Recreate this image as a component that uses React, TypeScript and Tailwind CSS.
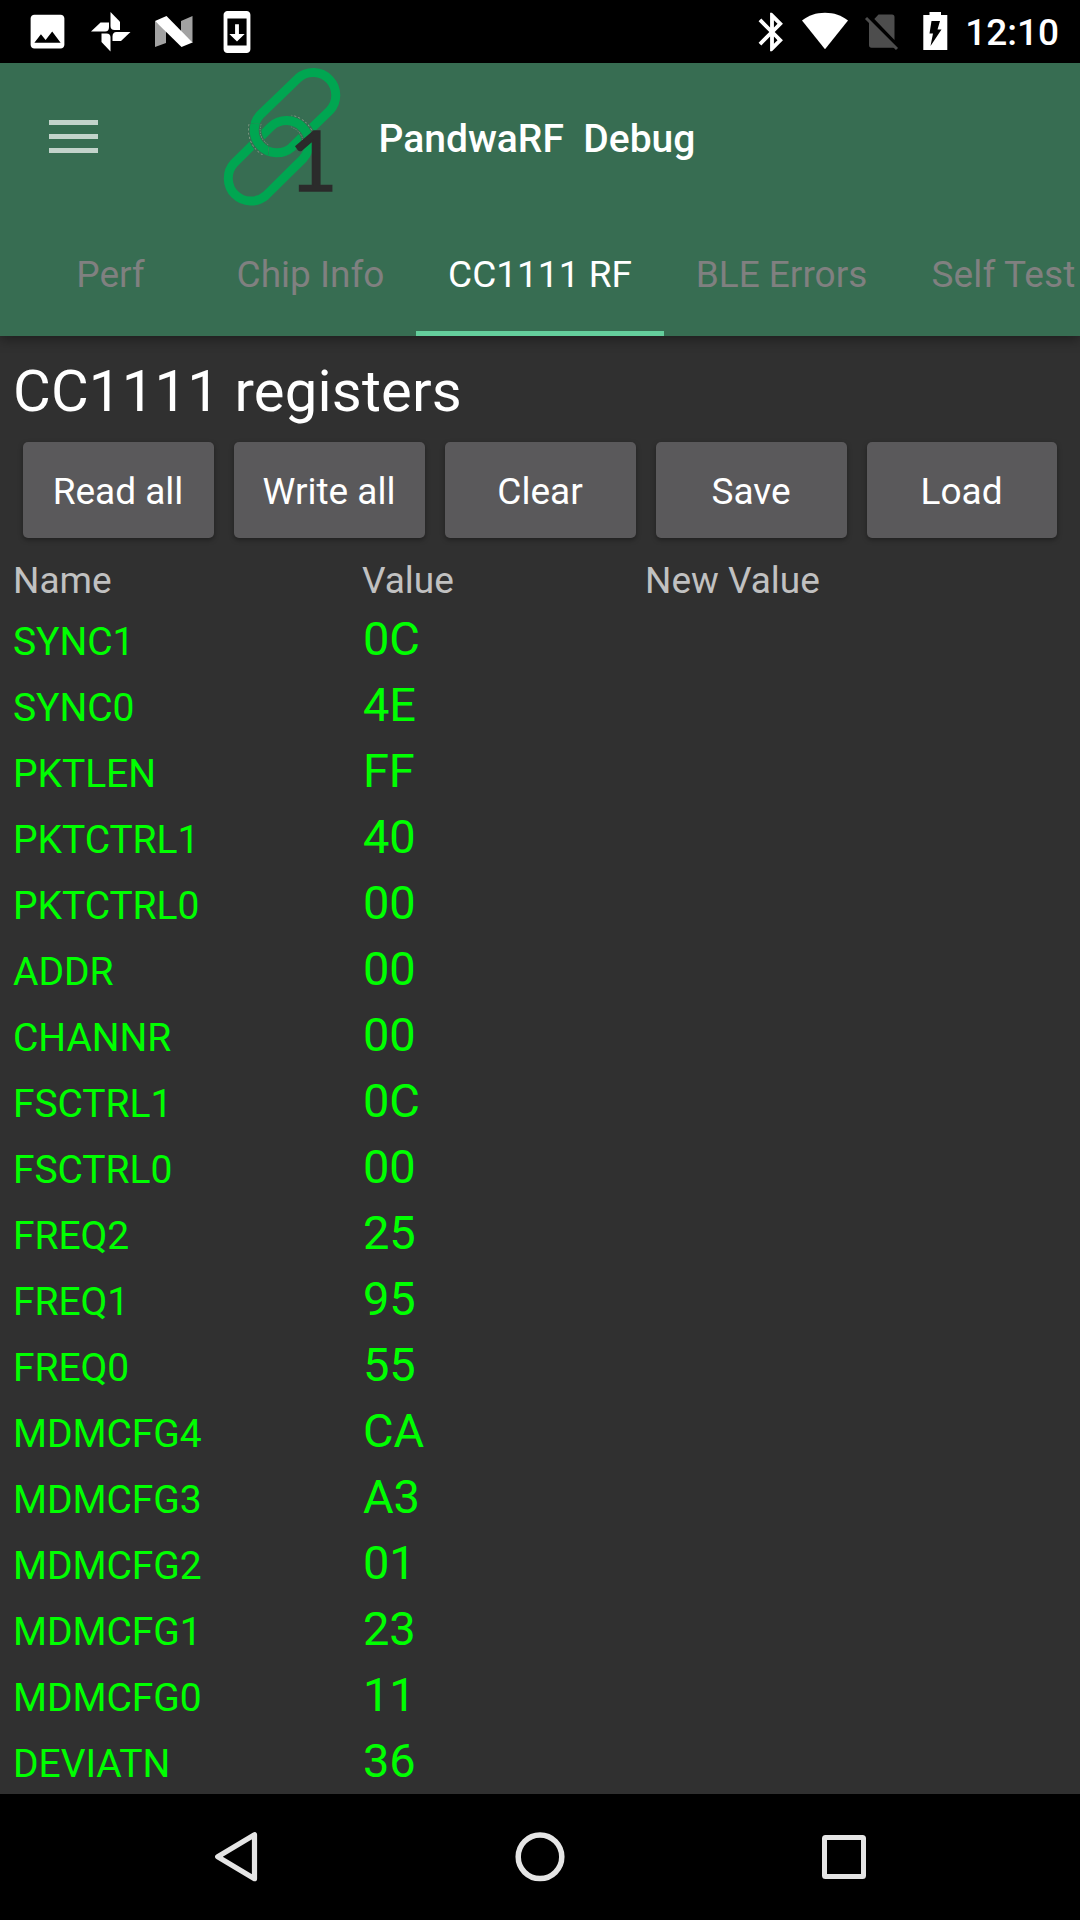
import React from "react";

const registers: [string, string][] = [
  ["SYNC1", "0C"],
  ["SYNC0", "4E"],
  ["PKTLEN", "FF"],
  ["PKTCTRL1", "40"],
  ["PKTCTRL0", "00"],
  ["ADDR", "00"],
  ["CHANNR", "00"],
  ["FSCTRL1", "0C"],
  ["FSCTRL0", "00"],
  ["FREQ2", "25"],
  ["FREQ1", "95"],
  ["FREQ0", "55"],
  ["MDMCFG4", "CA"],
  ["MDMCFG3", "A3"],
  ["MDMCFG2", "01"],
  ["MDMCFG1", "23"],
  ["MDMCFG0", "11"],
  ["DEVIATN", "36"],
];

const actions = ["Read all", "Write all", "Clear", "Save", "Load"];

function StatusBar() {
  return (
    <div className="flex h-[63px] shrink-0 items-start justify-between bg-black text-white">
      <div className="flex items-start">
        {/* picture */}
        <svg className="ml-[25px] mt-[9px] size-[45px]" viewBox="0 0 24 24" fill="currentColor">
          <path d="M21 19V5c0-1.100-.9-2-2-2H5c-1.100 0-2 .9-2 2v14c0 1.100.9 2 2 2h14c1.100 0 2-.9 2-2zM8.500 13.500l2.500 3.010L14.500 12l4.500 6H5l3.500-4.500z" />
        </svg>
        {/* photos pinwheel */}
        <svg className="ml-[20px] mt-[11px] h-[42px] w-[42px]" viewBox="0 0 42 42" fill="currentColor">
          <path d="M20.500 1L30 10.800V19H24.500Q20.500 19 20.500 15z" />
          <path d="M40.500 21L31 30H22.500V25.500Q22.500 21 26.500 21z" />
          <path d="M20.500 40.500L11.500 31V22.500H16.500Q20.500 22.500 20.500 26.500z" />
          <path d="M1 20.500L10.500 11.500H19V16Q19 20.500 15 20.500z" />
        </svg>
        {/* system N */}
        <svg className="ml-[22px] mt-[15px] h-[34px] w-[40px]" viewBox="0 0 40 34">
          <path d="M1 6L12 15V28L1 32z M27 6L38.500 1V28L27 17z" fill="#a2a2a2" />
          <path d="M1 6L12.500 1L38.500 27.500L27.500 32z" fill="#fff" />
        </svg>
        {/* system update */}
        <svg className="ml-[19.500px] mt-[9px] size-[46px]" viewBox="0 0 24 24" fill="currentColor">
          <path d="M17 1.010L7 1c-1.100 0-2 .9-2 2v18c0 1.100.9 2 2 2h10c1.100 0 2-.9 2-2V3c0-1.100-.9-1.990-2-1.990zM17 19H7V5h10v14zm-1-6h-3V8h-2v5H8l4 4 4-4z" />
        </svg>
      </div>
      <div className="flex items-start">
        {/* bluetooth */}
        <svg className="mt-[9px] size-[46px]" viewBox="0 0 24 24" fill="currentColor">
          <path d="M17.710 7.710L12 2h-1v7.590L6.410 5 5 6.410 10.590 12 5 17.590 6.410 19 11 14.410V22h1l5.710-5.710-4.300-4.290 4.300-4.290zM13 5.830l1.880 1.880L13 9.590V5.830zm1.880 10.460L13 18.170v-3.760l1.880 1.880z" />
        </svg>
        {/* wifi */}
        <svg className="ml-[6px] mt-[12px] h-[38px] w-[48px]" viewBox="0 0 48 38" fill="currentColor">
          <path d="M1 8.500C7.500 3.500 15 .8 24 .8s16.500 2.700 23 7.700L24 37.200z" />
        </svg>
        {/* no SIM */}
        <svg className="ml-[14px] mt-[13px] h-[38px] w-[37px]" viewBox="0 0 37 38">
          <path d="M11.300 6L15.500 1.500H29Q31.500 1.500 31.500 4V27z M6 8.500L31.500 34.700H8.500Q6 34.700 6 32z" fill="#4d4d4d" />
          <path d="M3 5L34 36" stroke="#4d4d4d" strokeWidth="3" />
        </svg>
        {/* charging battery */}
        <svg className="ml-[22.500px] mt-[12px] h-[39px] w-[25px]" viewBox="0 0 25 39">
          <path d="M6.500 0H18V3H24.300V38H.3V3H6.500z" fill="#fff" />
          <path d="M8.500 9H17L14.500 17.500H18.500L7.500 34L10 21.500H6.500z" fill="#000" />
        </svg>
        <span className="ml-[17.500px] mr-[21px] mt-[9px] text-[37px] font-medium leading-[48px]">12:10</span>
      </div>
    </div>
  );
}

function ChainLogo() {
  const upper = "M389 167A68 68 0 0 0 295 69L181 179A68 68 0 0 0 275 277Z";
  const lower = "M198 421A68 68 0 0 1 102 325L214 214A68 68 0 0 1 310 310Z";
  return (
    <svg className="-mt-[8.500px] ml-[122px] h-[150px] w-[130px] overflow-visible" viewBox="60 0 390 450" fill="none">
      <defs>
        <clipPath id="crossingLeft">
          <rect x="125" y="205" width="80" height="95" />
        </clipPath>
        <clipPath id="crossingRight">
          <rect x="275" y="175" width="85" height="85" />
        </clipPath>
      </defs>
      <path d={upper} stroke="#00a651" strokeWidth="27" />
      <g clipPath="url(#crossingRight)">
        <path d={lower} stroke="#376d52" strokeWidth="43" />
        <path d={lower} stroke="#8fa08c" strokeWidth="37" strokeDasharray="5 5" />
        <path d={lower} stroke="#376d52" strokeWidth="33" />
      </g>
      <path d={lower} stroke="#00a651" strokeWidth="27" />
      <g clipPath="url(#crossingLeft)">
        <path d={upper} stroke="#376d52" strokeWidth="43" />
        <path d={upper} stroke="#8fa08c" strokeWidth="37" strokeDasharray="5 5" />
        <path d={upper} stroke="#376d52" strokeWidth="33" />
        <path d={upper} stroke="#00a651" strokeWidth="27" />
      </g>
      <text x="267" y="409" fill="#2b2b2b" stroke="#2b2b2b" strokeWidth="4" fontFamily="Lato" fontSize="252">
        1
      </text>
    </svg>
  );
}

function AppBar() {
  return (
    <header className="relative z-10 flex h-[273px] shrink-0 flex-col bg-[#376d52] shadow-[0_4px_11px_rgba(0,0,0,0.35)]">
      <div className="flex h-[147px] shrink-0 items-start">
        <div className="ml-[48.500px] mt-[56.500px] flex w-[49px] flex-col gap-[9px]">
          <div className="h-[5px] bg-[#c3d3cb]" />
          <div className="h-[5px] bg-[#c3d3cb]" />
          <div className="h-[5px] bg-[#c3d3cb]" />
        </div>
        <ChainLogo />
        <h1 className="ml-[29px] mt-[51px] whitespace-pre text-[39px] font-medium leading-[50px] text-white">
          PandwaRF{"  "}Debug
        </h1>
      </div>
      <nav className="flex h-[126px] overflow-hidden whitespace-nowrap pl-[16px] text-center text-[37px] leading-[130px] text-[#808080]">
        <div className="w-[189px] shrink-0">Perf</div>
        <div className="w-[211px] shrink-0">Chip Info</div>
        <div className="h-[126px] w-[248px] shrink-0 border-b-[5px] border-[#64ce9c] text-white">CC1111 RF</div>
        <div className="w-[235px] shrink-0">BLE Errors</div>
        <div className="shrink-0 pl-[32.500px] tracking-[0.1px]">Self Test</div>
      </nav>
    </header>
  );
}

function NavigationBar() {
  return (
    <footer className="flex h-[126px] shrink-0 items-center bg-black pl-[208px]">
      <svg className="h-[56px] w-[56px]" viewBox="0 0 56 56" fill="none" stroke="#e5e5e5" strokeWidth="5.200" strokeLinejoin="round">
        <path d="M46.500 5.700V49.700L9.700 27.700z" />
      </svg>
      <svg className="ml-[248px] size-[56px]" viewBox="0 0 56 56" fill="none" stroke="#e5e5e5" strokeWidth="5.500">
        <circle cx="28" cy="27.800" r="21.800" />
      </svg>
      <svg className="ml-[248px] size-[56px]" viewBox="0 0 56 56" fill="none" stroke="#e5e5e5" strokeWidth="5">
        <rect x="8.500" y="8.500" width="39" height="39" rx="1" />
      </svg>
    </footer>
  );
}

export default function App() {
  return (
    <div className="flex h-[1920px] w-[1080px] flex-col overflow-hidden bg-[#303030] font-['Roboto',sans-serif]">
      <StatusBar />
      <AppBar />
      <main className="flex min-h-0 flex-1 flex-col overflow-hidden">
        <h2 className="mt-[21px] shrink-0 pl-[13px] text-[58px] leading-[68px] tracking-[0.18px] text-white">CC1111 registers</h2>
        <div className="mt-[17px] flex h-[96px] shrink-0 gap-[20px] pl-[23px]">
          {actions.map((label) => (
            <button
              key={label}
              className="w-[191px] shrink-0 rounded-[5px] bg-[#5a595b] pr-px pt-[3px] text-[37px] text-white shadow-[0_2px_5px_rgba(0,0,0,0.35)] last:w-[190px]"
            >
              {label}
            </button>
          ))}
        </div>
        <div className="mt-[21px] grid h-[44px] shrink-0 grid-cols-[349px_283px_1fr] pl-[13px] text-[37px] leading-[44px] text-[#c1c1c1]">
          <div>Name</div>
          <div>Value</div>
          <div>New Value</div>
        </div>
        <div className="mt-[3px] flex shrink-0 flex-col">
          {registers.map(([name, value]) => (
            <div key={name} className="grid h-[66px] shrink-0 grid-cols-[350px_283px] items-baseline pl-[13px] leading-[66px] text-[#00ff00]">
              <div className="text-[39px] tracking-[-0.06px]">{name}</div>
              <div className="text-[47px] tracking-[-0.2px]">{value}</div>
            </div>
          ))}
        </div>
      </main>
      <NavigationBar />
    </div>
  );
}
